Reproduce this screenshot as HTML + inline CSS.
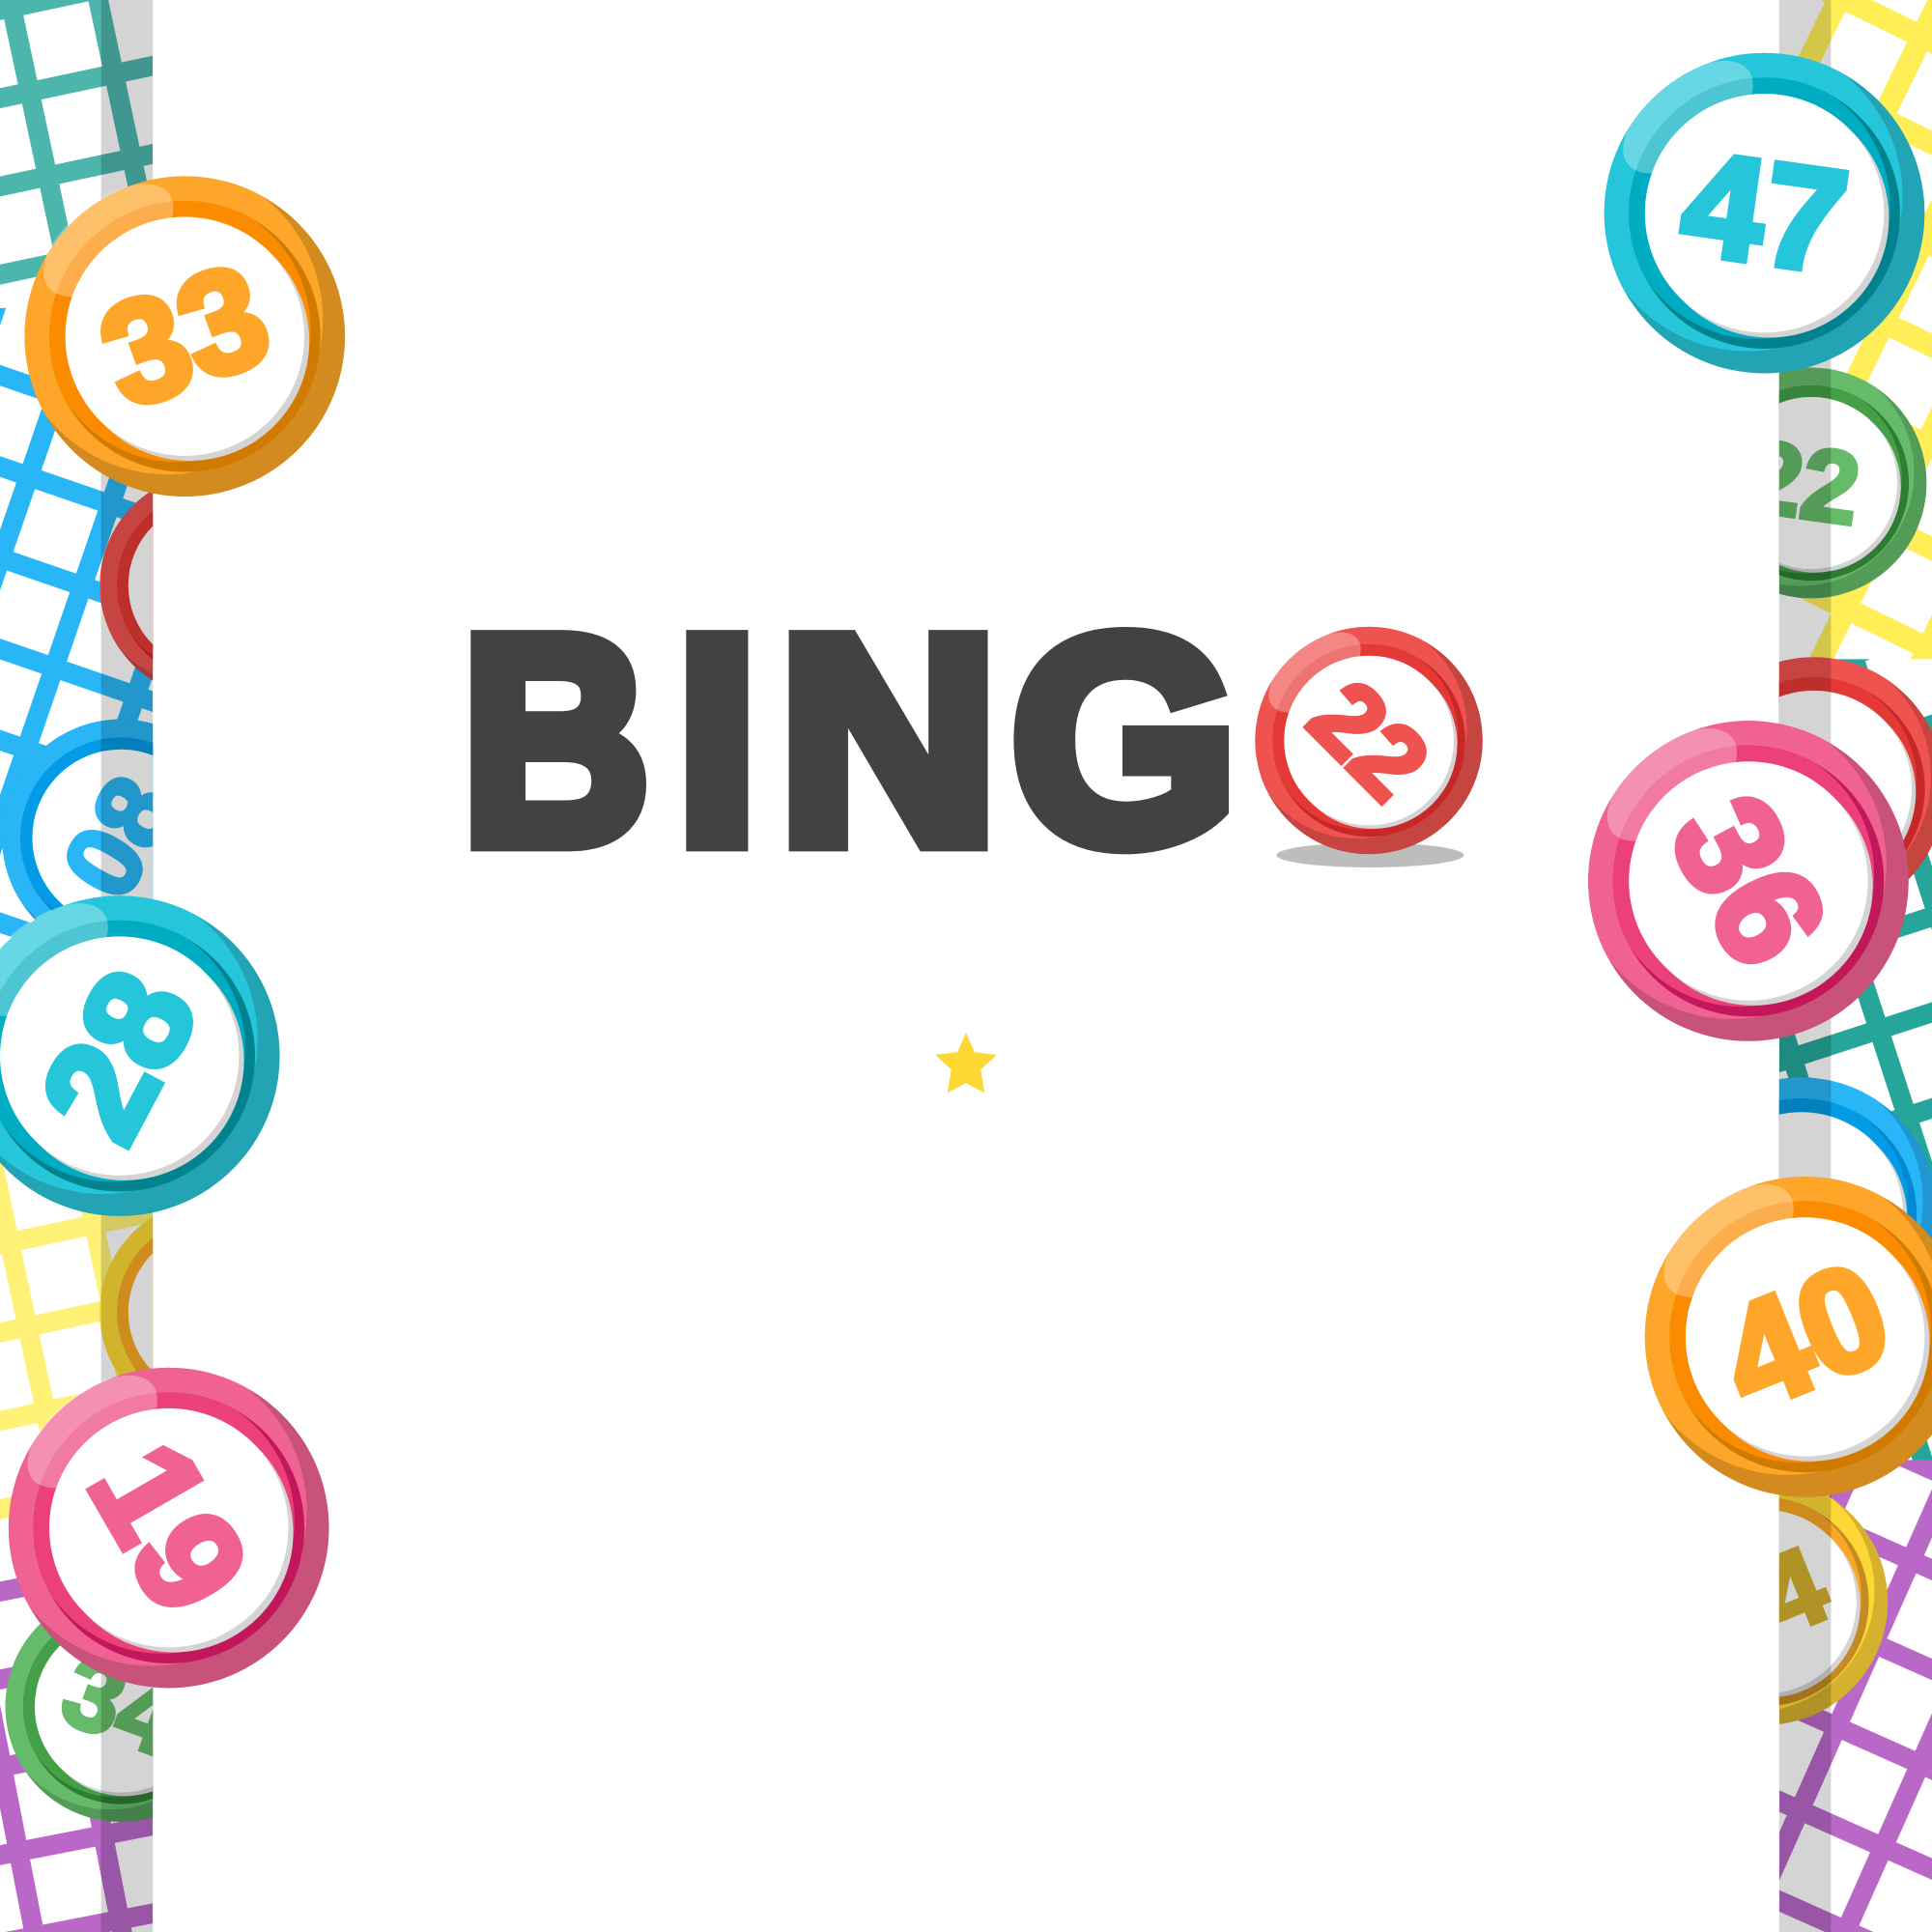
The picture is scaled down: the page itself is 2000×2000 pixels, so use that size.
<!DOCTYPE html>
<html><head><meta charset="utf-8"><style>html,body{margin:0;padding:0;background:#fff}svg{display:block}</style></head>
<body>
<svg xmlns="http://www.w3.org/2000/svg" width="2000" height="2000" viewBox="0 0 1568 1568" font-family="Liberation Sans, sans-serif" font-weight="bold">
<defs>
<clipPath id="cb"><circle r="130"/></clipPath>
<clipPath id="cr"><circle r="110"/></clipPath>
<clipPath id="L"><rect x="0" y="0" width="124" height="1568"/></clipPath>
<clipPath id="R"><rect x="1444" y="0" width="124" height="1568"/></clipPath>
<pattern id="pT" width="70" height="70" patternUnits="userSpaceOnUse" patternTransform="rotate(-12)"><rect width="70" height="70" fill="#4db6ac"/><rect x="16" y="16" width="54" height="54" fill="#fff"/></pattern>
<pattern id="pB" width="70" height="70" patternUnits="userSpaceOnUse" patternTransform="rotate(19)"><rect width="70" height="70" fill="#29b6f6"/><rect x="16" y="16" width="54" height="54" fill="#fff"/></pattern>
<pattern id="pY" width="70" height="70" patternUnits="userSpaceOnUse" patternTransform="rotate(-12)"><rect width="70" height="70" fill="#fff176"/><rect x="16" y="16" width="54" height="54" fill="#fff"/></pattern>
<pattern id="pP" width="70" height="70" patternUnits="userSpaceOnUse" patternTransform="rotate(-11)"><rect width="70" height="70" fill="#ba68c8"/><rect x="16" y="16" width="54" height="54" fill="#fff"/></pattern>
<pattern id="pY2" width="74" height="74" patternUnits="userSpaceOnUse" patternTransform="rotate(26)"><rect width="74" height="74" fill="#ffee58"/><rect x="18" y="18" width="56" height="56" fill="#fff"/></pattern>
<pattern id="pT2" width="74" height="74" patternUnits="userSpaceOnUse" patternTransform="rotate(-18)"><rect width="74" height="74" fill="#26a69a"/><rect x="16" y="16" width="58" height="58" fill="#fff"/></pattern>
<pattern id="pP2" width="74" height="74" patternUnits="userSpaceOnUse" patternTransform="rotate(24)"><rect width="74" height="74" fill="#ba68c8"/><rect x="16" y="16" width="58" height="58" fill="#fff"/></pattern>
</defs>
<rect width="1568" height="1568" fill="#fff"/>

<g clip-path="url(#L)">
<rect x="0" y="0" width="124" height="250" fill="url(#pT)"/>
<rect x="0" y="250" width="124" height="560" fill="url(#pB)"/>
<rect x="0" y="810" width="124" height="460" fill="url(#pY)"/>
<rect x="0" y="1270" width="124" height="298" fill="url(#pP)"/>
<g transform="translate(172,475) scale(0.7)">
<circle r="130" fill="#c64540"/><circle cx="-12" cy="-12" r="128" fill="#ef5350" clip-path="url(#cb)"/>
<circle r="110" fill="#c62828"/><circle cx="-6" cy="-6" r="108" fill="#e53935" clip-path="url(#cr)"/>
<circle cx="4" cy="4" r="97" fill="#d4d4d4"/><circle r="97" fill="#fff"/></g>
<g transform="translate(98,680) scale(0.74)">
<circle r="130" fill="#2196d3"/><circle cx="-12" cy="-12" r="128" fill="#29b6f6" clip-path="url(#cb)"/>
<circle r="110" fill="#0288d1"/><circle cx="-6" cy="-6" r="108" fill="#039be5" clip-path="url(#cr)"/>
<circle cx="4" cy="4" r="97" fill="#d4d4d4"/><circle r="97" fill="#fff"/>
<text transform="rotate(-60)" x="0" y="38" font-size="115" fill="#29b6f6" stroke="#29b6f6" stroke-width="5" text-anchor="middle">08</text></g>
<g transform="translate(172,1065) scale(0.7)">
<circle r="130" fill="#d4b12f"/><circle cx="-12" cy="-12" r="128" fill="#fdd835" clip-path="url(#cb)"/>
<circle r="110" fill="#d08c20"/><circle cx="-6" cy="-6" r="108" fill="#f9a825" clip-path="url(#cr)"/>
<circle cx="4" cy="4" r="97" fill="#d4d4d4"/><circle r="97" fill="#fff"/></g>
<g transform="translate(98,1385) scale(0.72)">
<circle r="130" fill="#529c57"/><circle cx="-12" cy="-12" r="128" fill="#66bb6a" clip-path="url(#cb)"/>
<circle r="110" fill="#2e7d32"/><circle cx="-6" cy="-6" r="108" fill="#43a047" clip-path="url(#cr)"/>
<circle cx="4" cy="4" r="97" fill="#d4d4d4"/><circle r="97" fill="#fff"/>
<text transform="rotate(20)" x="0" y="38" font-size="115" fill="#66bb6a" stroke="#66bb6a" stroke-width="5" text-anchor="middle">34</text></g>
</g>
<rect x="82" y="0" width="42" height="1568" fill="#000" opacity="0.17"/>

<g clip-path="url(#R)">
<rect x="1444" y="0" width="124" height="535" fill="url(#pY2)"/>
<rect x="1444" y="535" width="124" height="650" fill="url(#pT2)"/>
<rect x="1444" y="1185" width="124" height="383" fill="url(#pP2)"/>
<g transform="translate(1470,392) scale(0.72)">
<circle r="130" fill="#529c57"/><circle cx="-12" cy="-12" r="128" fill="#66bb6a" clip-path="url(#cb)"/>
<circle r="110" fill="#2e7d32"/><circle cx="-6" cy="-6" r="108" fill="#43a047" clip-path="url(#cr)"/>
<circle cx="4" cy="4" r="97" fill="#d4d4d4"/><circle r="97" fill="#fff"/>
<text transform="rotate(8)" x="-10" y="40" font-size="115" fill="#66bb6a" stroke="#66bb6a" stroke-width="5" text-anchor="middle">22</text></g>
<g transform="translate(1472,640) scale(0.82)">
<circle r="130" fill="#c64540"/><circle cx="-12" cy="-12" r="128" fill="#ef5350" clip-path="url(#cb)"/>
<circle r="110" fill="#c62828"/><circle cx="-6" cy="-6" r="108" fill="#e53935" clip-path="url(#cr)"/>
<circle cx="4" cy="4" r="97" fill="#d4d4d4"/><circle r="97" fill="#fff"/></g>
<g transform="translate(1462,985) scale(0.85)">
<circle r="130" fill="#2196d3"/><circle cx="-12" cy="-12" r="128" fill="#29b6f6" clip-path="url(#cb)"/>
<circle r="110" fill="#0288d1"/><circle cx="-6" cy="-6" r="108" fill="#039be5" clip-path="url(#cr)"/>
<circle cx="4" cy="4" r="97" fill="#d4d4d4"/><circle r="97" fill="#fff"/></g>
<g transform="translate(1432,1300) scale(0.77)">
<circle r="130" fill="#d4b12f"/><circle cx="-12" cy="-12" r="128" fill="#fdd835" clip-path="url(#cb)"/>
<circle r="110" fill="#c68a22"/><circle cx="-6" cy="-6" r="108" fill="#f9a825" clip-path="url(#cr)"/>
<circle cx="4" cy="4" r="97" fill="#d4d4d4"/><circle r="97" fill="#fff"/>
<text transform="rotate(-22)" x="0" y="40" font-size="115" fill="#d4b12f" stroke="#d4b12f" stroke-width="5" text-anchor="middle">14</text></g>
</g>
<rect x="1444" y="0" width="42" height="1568" fill="#000" opacity="0.17"/>

<g transform="translate(150,273)">
<circle r="130" fill="#d38b1f"/><circle cx="-14" cy="-14" r="126" fill="#fea62a" clip-path="url(#cb)"/>
<circle r="110" fill="#d07a00"/><circle cx="-6" cy="-6" r="108" fill="#fb8c00" clip-path="url(#cr)"/>
<circle cx="4" cy="4" r="97" fill="#d4d4d4"/><circle r="97" fill="#fff"/>
<ellipse cx="-62" cy="-78" rx="62" ry="32" transform="rotate(-38 -62 -78)" fill="#fff" opacity="0.3"/>
<text transform="rotate(-20)" x="0" y="40" font-size="118" fill="#fea62a" stroke="#fea62a" stroke-width="6" text-anchor="middle">33</text></g>

<g transform="translate(97,857)">
<circle r="130" fill="#22a4b5"/><circle cx="-14" cy="-14" r="126" fill="#26c6da" clip-path="url(#cb)"/>
<circle r="110" fill="#00838f"/><circle cx="-6" cy="-6" r="108" fill="#00acc1" clip-path="url(#cr)"/>
<circle cx="4" cy="4" r="97" fill="#d4d4d4"/><circle r="97" fill="#fff"/>
<ellipse cx="-62" cy="-78" rx="62" ry="32" transform="rotate(-38 -62 -78)" fill="#fff" opacity="0.3"/>
<text transform="rotate(-62)" x="0" y="40" font-size="118" fill="#26c6da" stroke="#26c6da" stroke-width="6" text-anchor="middle">28</text></g>

<g transform="translate(137,1240)">
<circle r="130" fill="#c9527a"/><circle cx="-14" cy="-14" r="126" fill="#f06292" clip-path="url(#cb)"/>
<circle r="110" fill="#c2185b"/><circle cx="-6" cy="-6" r="108" fill="#ec407a" clip-path="url(#cr)"/>
<circle cx="4" cy="4" r="97" fill="#d4d4d4"/><circle r="97" fill="#fff"/>
<ellipse cx="-62" cy="-78" rx="62" ry="32" transform="rotate(-38 -62 -78)" fill="#fff" opacity="0.3"/>
<text transform="rotate(60)" x="0" y="40" font-size="118" fill="#f06292" stroke="#f06292" stroke-width="6" text-anchor="middle">19</text></g>

<g transform="translate(1432,173)">
<circle r="130" fill="#22a4b5"/><circle cx="-14" cy="-14" r="126" fill="#26c6da" clip-path="url(#cb)"/>
<circle r="110" fill="#00838f"/><circle cx="-6" cy="-6" r="108" fill="#00acc1" clip-path="url(#cr)"/>
<circle cx="4" cy="4" r="97" fill="#d4d4d4"/><circle r="97" fill="#fff"/>
<ellipse cx="-62" cy="-78" rx="62" ry="32" transform="rotate(-38 -62 -78)" fill="#fff" opacity="0.3"/>
<text transform="rotate(8)" x="0" y="40" font-size="118" fill="#26c6da" stroke="#26c6da" stroke-width="6" text-anchor="middle">47</text></g>

<g transform="translate(1419,715)">
<circle r="130" fill="#c9527a"/><circle cx="-14" cy="-14" r="126" fill="#f06292" clip-path="url(#cb)"/>
<circle r="110" fill="#c2185b"/><circle cx="-6" cy="-6" r="108" fill="#ec407a" clip-path="url(#cr)"/>
<circle cx="4" cy="4" r="97" fill="#d4d4d4"/><circle r="97" fill="#fff"/>
<ellipse cx="-62" cy="-78" rx="62" ry="32" transform="rotate(-38 -62 -78)" fill="#fff" opacity="0.3"/>
<text transform="rotate(62)" x="0" y="40" font-size="118" fill="#f06292" stroke="#f06292" stroke-width="6" text-anchor="middle">36</text></g>

<g transform="translate(1465,1085)">
<circle r="130" fill="#d38b1f"/><circle cx="-14" cy="-14" r="126" fill="#fea62a" clip-path="url(#cb)"/>
<circle r="110" fill="#d07a00"/><circle cx="-6" cy="-6" r="108" fill="#fb8c00" clip-path="url(#cr)"/>
<circle cx="4" cy="4" r="97" fill="#d4d4d4"/><circle r="97" fill="#fff"/>
<ellipse cx="-62" cy="-78" rx="62" ry="32" transform="rotate(-38 -62 -78)" fill="#fff" opacity="0.3"/>
<text transform="rotate(-22)" x="0" y="40" font-size="118" fill="#fea62a" stroke="#fea62a" stroke-width="6" text-anchor="middle">40</text></g>

<g fill="#424242" stroke="#424242" stroke-width="16" stroke-linejoin="miter" font-size="238">
<text x="375" y="683" textLength="152" lengthAdjust="spacingAndGlyphs">B</text>
<text x="582" y="683" text-anchor="middle">I</text>
<text x="632" y="683" textLength="178" lengthAdjust="spacingAndGlyphs">N</text>
<text x="821" y="683" textLength="183" lengthAdjust="spacingAndGlyphs">G</text>
</g>
<ellipse cx="1112" cy="694" rx="76" ry="10" fill="#bdbdbd"/>
<g transform="translate(1111,601) scale(0.71)">
<circle r="130" fill="#c64540"/><circle cx="-14" cy="-14" r="126" fill="#ef5350" clip-path="url(#cb)"/>
<circle r="110" fill="#c62828"/><circle cx="-6" cy="-6" r="108" fill="#e53935" clip-path="url(#cr)"/>
<circle cx="4" cy="4" r="97" fill="#d4d4d4"/><circle r="97" fill="#fff"/>
<ellipse cx="-62" cy="-78" rx="62" ry="32" transform="rotate(-38 -62 -78)" fill="#fff" opacity="0.3"/>
<text transform="rotate(45)" x="0" y="40" font-size="118" fill="#ef5350" stroke="#ef5350" stroke-width="6" text-anchor="middle">22</text></g>

<polygon points="784,838 791,854 809,856 796,868 799,887 784,879 769,887 772,868 759,856 777,854" fill="#fdd835"/>
</svg>
</body></html>
